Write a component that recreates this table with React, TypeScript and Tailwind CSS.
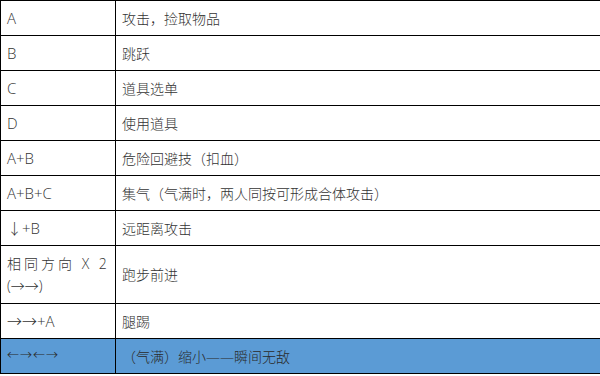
import React from 'react';

interface Move {
    keys: React.ReactNode;
    action: string;
    tall?: boolean;
    highlight?: boolean;
}

const moves: Move[] = [
    { keys: 'A', action: '攻击，捡取物品' },
    { keys: 'B', action: '跳跃' },
    { keys: 'C', action: '道具选单' },
    { keys: 'D', action: '使用道具' },
    { keys: 'A+B', action: '危险回避技（扣血）' },
    { keys: 'A+B+C', action: '集气（气满时，两人同按可形成合体攻击）' },
    { keys: '↓+B', action: '远距离攻击' },
    {
        keys: (
            <>
                <span className="block tracking-[3px] whitespace-nowrap text-[14px]">相同方向 X 2</span>
                <span className="block text-[14px]">(→→)</span>
            </>
        ),
        action: '跑步前进',
        tall: true,
    },
    { keys: '→→+A', action: '腿踢' },
    { keys: '←→←→', action: '（气满）缩小——瞬间无敌', highlight: true },
];

const App: React.FC = () => {
    return (
        <div
            className="w-[600px] h-[376px] bg-white overflow-hidden"
            style={{ fontFamily: '"Open Sans", "Noto Sans CJK SC", sans-serif' }}
        >
            <div className="w-full border-t border-l border-black text-[14px] font-light text-[#333]">
                {moves.map((m, i) => (
                    <div
                        key={i}
                        className={`grid grid-cols-[115px_1fr] border-b border-black ${m.tall ? 'h-[58px]' : 'h-[35px]'} ${m.highlight ? 'bg-[#5b9bd5] text-[#2a2a2a]' : ''}`}
                    >
                        <div className="flex flex-col justify-center border-r border-black pl-[6px] leading-[22px] text-[15px]">
                            {m.highlight ? <span className="text-[12px] tracking-[1px]">{m.keys}</span> : m.keys}
                        </div>
                        <div className="flex items-center pl-[6px]">{m.action}</div>
                    </div>
                ))}
            </div>
        </div>
    );
};

export default App;
